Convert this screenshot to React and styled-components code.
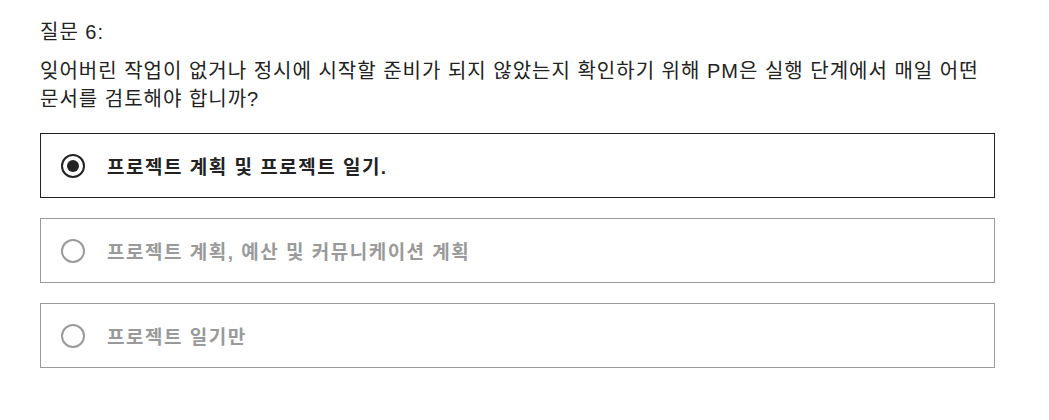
import React, { useState } from "react";
import styled, { createGlobalStyle } from "styled-components";

const GlobalStyle = createGlobalStyle`
  html, body {
    margin: 0;
    padding: 0;
    background: #ffffff;
  }
  body {
    font-family: "Liberation Sans", "Noto Sans CJK KR", sans-serif;
    color: #222222;
  }
`;

const options = [
  "프로젝트 계획 및 프로젝트 일기.",
  "프로젝트 계획, 예산 및 커뮤니케이션 계획",
  "프로젝트 일기만",
];

function App() {
  const [selected, setSelected] = useState(0);

  return (
    <>
      <GlobalStyle />
      <Page>
        <QuestionLabel>질문 6:</QuestionLabel>
        <QuestionText>
          잊어버린 작업이 없거나 정시에 시작할 준비가 되지 않았는지 확인하기 위해 PM은 실행 단계에서 매일 어떤
          문서를 검토해야 합니까?
        </QuestionText>
        <OptionList>
          {options.map((text, i) => (
            <Option key={i} $active={selected === i} onClick={() => setSelected(i)}>
              <Radio $active={selected === i} />
              <OptionText $active={selected === i}>{text}</OptionText>
            </Option>
          ))}
        </OptionList>
      </Page>
    </>
  );
}

const Page = styled.div`
  width: 955px;
  padding: 18px 0 0 40px;
`;

const QuestionLabel = styled.div`
  font-size: 20px;
  line-height: 28px;
  letter-spacing: 1px;
`;

const QuestionText = styled.p`
  margin: 11px 0 0;
  font-size: 20px;
  line-height: 28px;
  letter-spacing: 1px;
`;

const OptionList = styled.div`
  display: flex;
  flex-direction: column;
  gap: 20px;
  margin-top: 20px;
`;

const Option = styled.div`
  height: 63px;
  display: flex;
  align-items: center;
  padding-left: 20px;
  border: 1px solid ${(p) => (p.$active ? "#222222" : "#9a9a9a")};
  cursor: pointer;
`;

const Radio = styled.span`
  position: relative;
  width: 20px;
  height: 20px;
  border-radius: 50%;
  border: 2px solid ${(p) => (p.$active ? "#222222" : "#9a9a9a")};
  flex-shrink: 0;

  &::after {
    content: "";
    display: ${(p) => (p.$active ? "block" : "none")};
    position: absolute;
    top: 4px;
    left: 4px;
    width: 12px;
    height: 12px;
    border-radius: 50%;
    background: #222222;
  }
`;

const OptionText = styled.span`
  margin-left: 22px;
  font-size: 19px;
  font-weight: 700;
  letter-spacing: 1.5px;
  color: ${(p) => (p.$active ? "#222222" : "#9a9a9a")};
`;

export default App;
